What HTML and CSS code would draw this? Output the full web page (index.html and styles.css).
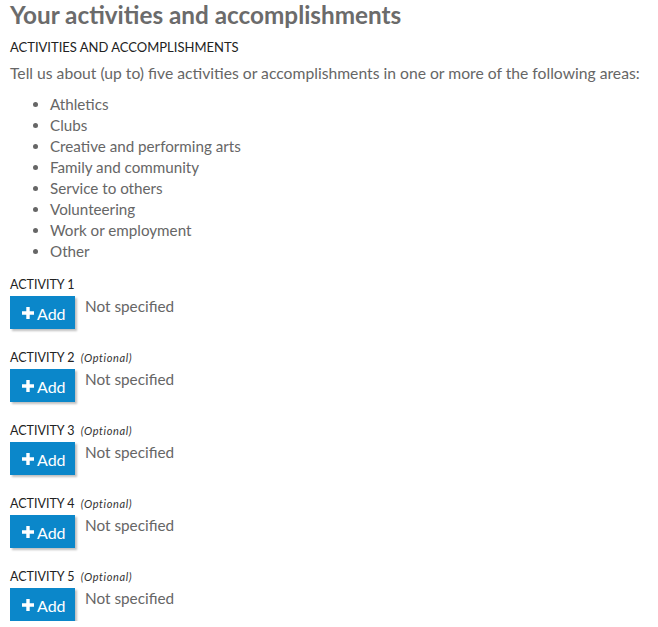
FILE: index.html
```
<!DOCTYPE html>
<html>
<head>
<meta charset="utf-8">
<link rel="stylesheet" href="styles.css">
</head>
<body>
<main class="page">
  <h1 class="title">Your activities and accomplishments</h1>
  <h2 class="section-label">ACTIVITIES AND ACCOMPLISHMENTS</h2>
  <p class="intro">Tell us about (up to) five activities or accomplishments in one or more of the following areas:</p>
  <ul class="areas">
    <li>Athletics</li>
    <li>Clubs</li>
    <li>Creative and performing arts</li>
    <li>Family and community</li>
    <li>Service to others</li>
    <li>Volunteering</li>
    <li>Work or employment</li>
    <li>Other</li>
  </ul>
  <section class="activity">
    <div class="activity-label">ACTIVITY 1</div>
    <div class="activity-row">
      <button class="add-btn"><svg class="plus" viewBox="0 0 12 12"><path d="M4.3 0h3.4v4.3H12v3.4H7.7V12H4.3V7.7H0V4.3h4.3z"/></svg>Add</button>
      <span class="status">Not specified</span>
    </div>
  </section>
  <section class="activity">
    <div class="activity-label">ACTIVITY 2 <em class="optional">(Optional)</em></div>
    <div class="activity-row">
      <button class="add-btn"><svg class="plus" viewBox="0 0 12 12"><path d="M4.3 0h3.4v4.3H12v3.4H7.7V12H4.3V7.7H0V4.3h4.3z"/></svg>Add</button>
      <span class="status">Not specified</span>
    </div>
  </section>
  <section class="activity">
    <div class="activity-label">ACTIVITY 3 <em class="optional">(Optional)</em></div>
    <div class="activity-row">
      <button class="add-btn"><svg class="plus" viewBox="0 0 12 12"><path d="M4.3 0h3.4v4.3H12v3.4H7.7V12H4.3V7.7H0V4.3h4.3z"/></svg>Add</button>
      <span class="status">Not specified</span>
    </div>
  </section>
  <section class="activity">
    <div class="activity-label">ACTIVITY 4 <em class="optional">(Optional)</em></div>
    <div class="activity-row">
      <button class="add-btn"><svg class="plus" viewBox="0 0 12 12"><path d="M4.3 0h3.4v4.3H12v3.4H7.7V12H4.3V7.7H0V4.3h4.3z"/></svg>Add</button>
      <span class="status">Not specified</span>
    </div>
  </section>
  <section class="activity">
    <div class="activity-label">ACTIVITY 5 <em class="optional">(Optional)</em></div>
    <div class="activity-row">
      <button class="add-btn"><svg class="plus" viewBox="0 0 12 12"><path d="M4.3 0h3.4v4.3H12v3.4H7.7V12H4.3V7.7H0V4.3h4.3z"/></svg>Add</button>
      <span class="status">Not specified</span>
    </div>
  </section>
</main>
</body>
</html>
```
FILE: styles.css
```
* { box-sizing: border-box; }
html, body { margin: 0; padding: 0; background: #fff; }
body { font-family: Lato, "Open Sans", sans-serif; color: #666; }
.page { padding: 0 10px; }
.title {
  margin: 0;
  padding-top: 1px;
  font-size: 24.3px;
  line-height: 28px;
  font-weight: 700;
  color: #6b6b6b;
}
.section-label {
  margin: 9px 0 0;
  font-size: 13px;
  line-height: 18px;
  font-weight: 400;
  color: #222;
}
.intro {
  margin: 7px 0 0;
  font-size: 15.7px;
  line-height: 20px;
}
.areas {
  margin: 11px 0 0;
  padding-left: 40px;
  font-size: 15.2px;
  line-height: 21px;
}
.areas + .activity { margin-top: 14px; }
.activity + .activity { margin-top: 20px; }
.activity-label {
  font-size: 12.5px;
  line-height: 17px;
  color: #222;
}
.optional { font-size: 11px; color: #333; margin-left: 3px; letter-spacing: 0.6px; }
.activity-row {
  display: flex;
  align-items: flex-start;
  gap: 10px;
  margin-top: 3px;
}
.add-btn {
  display: flex;
  align-items: center;
  gap: 3px;
  height: 33px;
  width: 65px;
  padding: 1px 0 0 12px;
  border: none;
  background: #0b87ca;
  color: #fff;
  font-family: inherit;
  font-size: 16px;
  box-shadow: 2px 2px 2px rgba(0,0,0,0.25);
}
.plus { width: 12px; height: 12px; fill: #fff; }
.status { font-size: 15.3px; line-height: 20px; color: #666; margin-top: 0; }
```
